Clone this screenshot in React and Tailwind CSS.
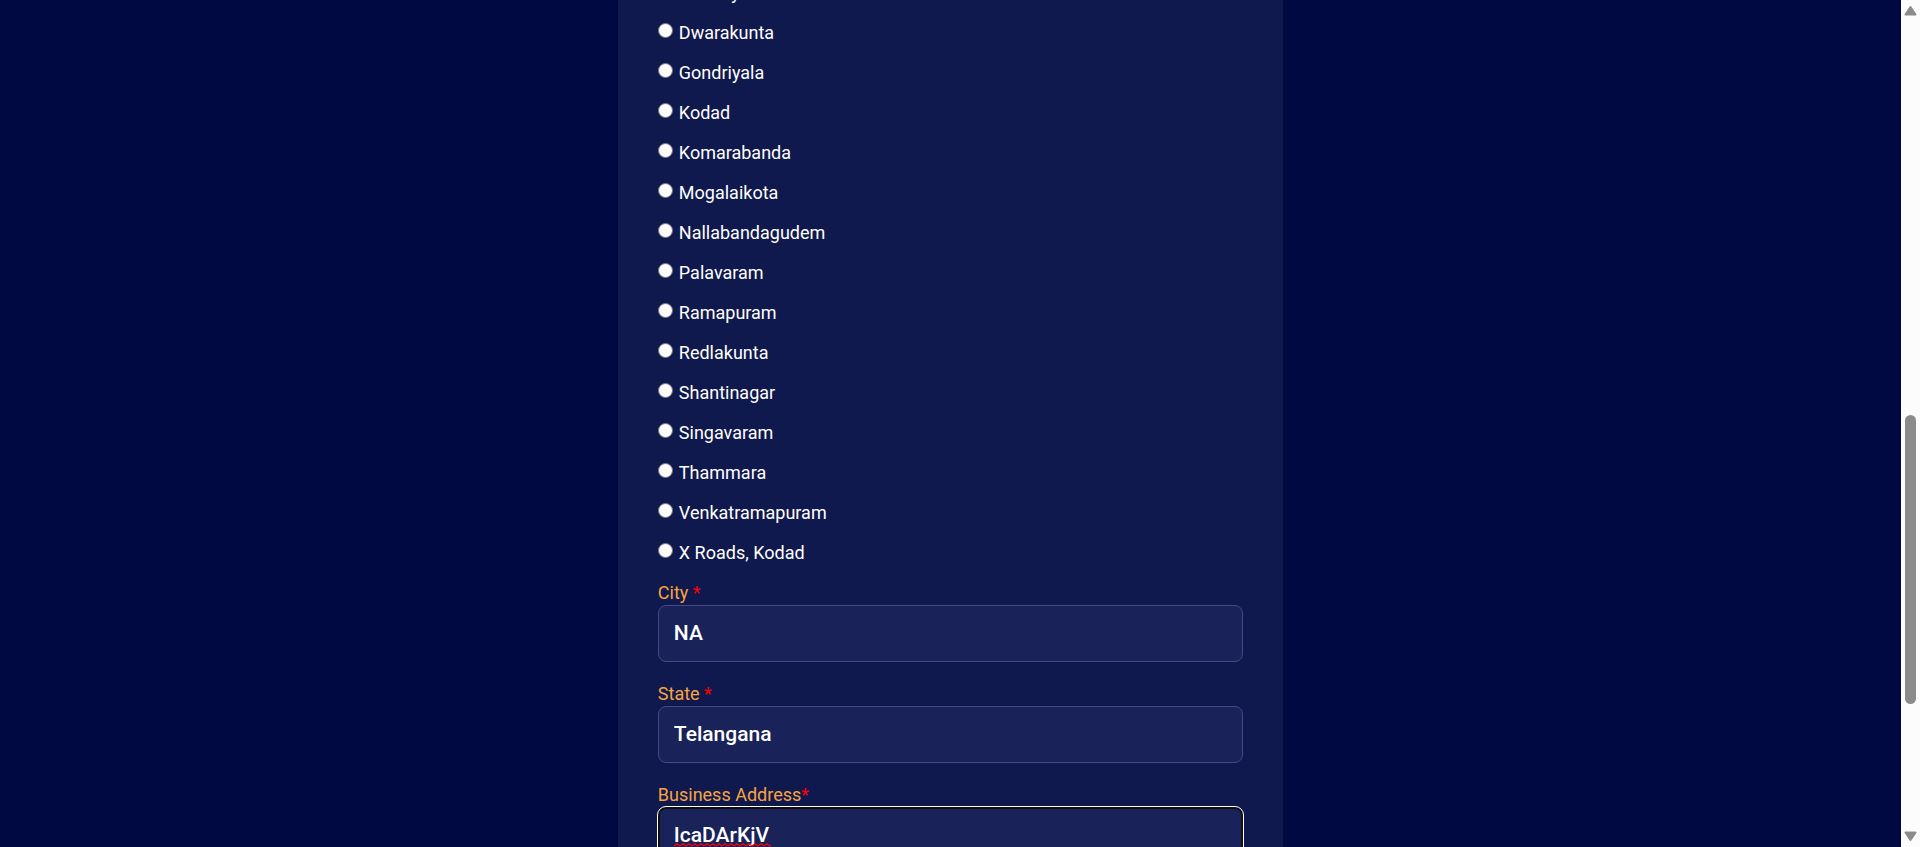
import React from "react";

const places = [
  "Chimiryala",
  "Dwarakunta",
  "Gondriyala",
  "Kodad",
  "Komarabanda",
  "Mogalaikota",
  "Nallabandagudem",
  "Palavaram",
  "Ramapuram",
  "Redlakunta",
  "Shantinagar",
  "Singavaram",
  "Thammara",
  "Venkatramapuram",
  "X Roads, Kodad",
];

function PlaceOption({ name }) {
  return (
    <label className="flex h-10 items-start gap-[6px] text-lg leading-10 text-white">
      <input
        type="radio"
        name="place"
        value={name}
        className="mt-[10px] h-[15px] w-[15px] shrink-0 appearance-none rounded-full border border-[#767676] bg-white"
      />
      {name}
    </label>
  );
}

function Field({ id, label, value, active }) {
  return (
    <div className="mb-5 flex flex-col">
      <label htmlFor={id} className="text-lg leading-6 text-[#f7a440]">
        {label}
        <span className="text-[#ff0000]">*</span>
      </label>
      <div className="relative flex flex-col">
        <input
          id={id}
          type="text"
          defaultValue={value}
          className={
            active
              ? "h-[57px] w-full rounded-lg border-2 border-[#101010] bg-[#192259] px-[14px] pb-[2px] text-[21px] font-medium text-white outline outline-1 outline-white"
              : "h-[57px] w-full rounded-lg border border-[#434a86] bg-[#192259] px-[15px] pb-[2px] text-[21px] font-medium text-white outline-none"
          }
        />
        {active && (
          <svg
            aria-hidden="true"
            width="97"
            height="4"
            viewBox="0 0 97 4"
            className="pointer-events-none absolute left-4 top-9"
          >
            <defs>
              <pattern id="spelling" width="6" height="4" patternUnits="userSpaceOnUse">
                <path d="M-1 3.5 L0 3 L3 0.7 L6 3 L7 3.5" fill="none" stroke="#ff0000" strokeWidth="1.2" />
              </pattern>
            </defs>
            <rect width="97" height="4" fill="url(#spelling)" />
          </svg>
        )}
      </div>
    </div>
  );
}

function Scrollbar() {
  return (
    <div aria-hidden="true" className="flex w-[19px] shrink-0 flex-col items-center bg-[#fcfcfc] py-[5px]">
      <svg width="13" height="11" viewBox="0 0 13 11" className="shrink-0">
        <path d="M6.5 2 L11.5 9.5 H1.5 Z" fill="#8b8b8b" stroke="#8b8b8b" strokeWidth="2" strokeLinejoin="round" />
      </svg>
      <div className="min-h-0 grow-[399]" />
      <div className="w-[11px] min-h-0 grow-[289] rounded-full bg-[#8b8b8b]" />
      <div className="min-h-0 grow-[127]" />
      <svg width="13" height="11" viewBox="0 0 13 11" className="shrink-0">
        <path d="M6.5 9 L11.5 1.5 H1.5 Z" fill="#8b8b8b" stroke="#8b8b8b" strokeWidth="2" strokeLinejoin="round" />
      </svg>
    </div>
  );
}

export default function App() {
  return (
    <div className="flex h-screen overflow-hidden bg-[#000942] font-['Roboto',sans-serif]">
      <main className="flex min-w-0 grow items-start justify-center">
        <form className="-mt-[27px] w-[35%] bg-[#0f194d] px-10 pb-20">
          <fieldset>
            {places.map((name) => (
              <PlaceOption key={name} name={name} />
            ))}
          </fieldset>
          <div className="pt-2">
            <Field id="city" label="City " value="NA" />
            <Field id="state" label="State " value="Telangana" />
            <Field id="address" label="Business Address" value="IcaDArKjV" active />
          </div>
        </form>
      </main>
      <Scrollbar />
    </div>
  );
}
